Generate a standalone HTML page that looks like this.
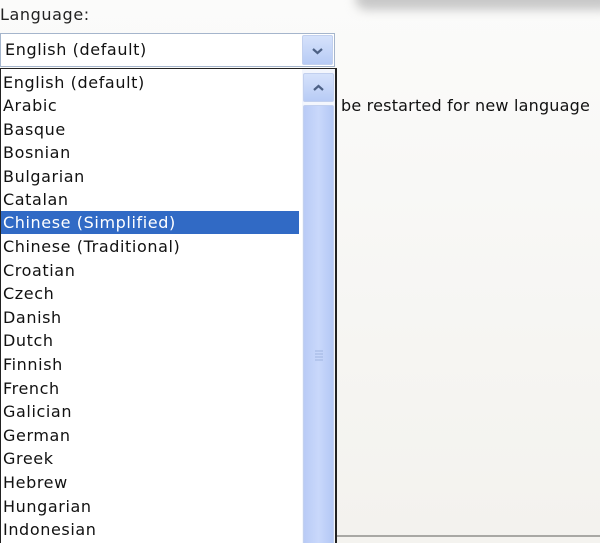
<!DOCTYPE html>
<html style="overflow:hidden;height:543px"><head><style>
body{margin:0;width:600px;height:543px;overflow:hidden;background:#f4f3ef;font-family:"DejaVu Sans","Liberation Sans",sans-serif;position:relative;letter-spacing:0.6px}
.bg{position:absolute;left:0;top:0;width:600px;height:535px;background:linear-gradient(#fbfbfa,#f3f2ee)}
.shadow{position:absolute;left:355px;top:-14px;width:260px;height:24px;border-radius:12px;background:#c8c8c8;filter:blur(5px)}
.bottomline{position:absolute;left:336px;top:535px;width:264px;height:2px;background:#a8a8a4}
.lbl{position:absolute;left:0;top:5px;font-size:16px;color:#222}
.combo{position:absolute;left:0;top:33px;width:333px;height:32px;border:1px solid #a5b5cc;background:#fff}
.combo span{position:absolute;left:4px;top:6px;font-size:16px;color:#111}
.btn{position:absolute;background:linear-gradient(#d6e2fb,#b7cbf5);border:1px solid #c2d0ee;border-radius:2px}
.list{position:absolute;left:0;top:68px;width:334px;height:480px;border:1px solid #222;border-right:2px solid #222;background:#fff;overflow:hidden}
.it{position:absolute;left:2px;font-size:16px;color:#111;white-space:nowrap;height:23px;line-height:23px}
.sel{position:absolute;left:0;top:142px;width:298px;height:23px;background:#316ac5}
.sb{position:absolute;left:301px;top:0;width:33px;height:480px;background:#f3f6fd}
.msg{position:absolute;left:341px;top:96px;font-size:16px;color:#111;white-space:nowrap;letter-spacing:0.2px}
</style></head><body>
<div class="bg"></div>
<div class="shadow"></div>
<div class="bottomline"></div>
<div class="lbl">Language:</div>
<div class="combo"><span>English (default)</span>
<div class="btn" style="left:301px;top:1px;width:29px;height:28px"><svg width="29" height="28"><path d="M10 13l4.5 4 4.5-4" stroke="#4d6185" stroke-width="2.2" fill="none"/></svg></div></div>
<div class="msg">be restarted for new language</div>
<div class="list">
<div class="sel"></div>
<div class="sb">
<div class="btn" style="left:1px;top:4px;width:29px;height:27px"><svg width="29" height="27"><path d="M10 16l4.5-4 4.5 4" stroke="#4d6185" stroke-width="2.2" fill="none"/></svg></div>
<div class="btn" style="left:1px;top:36px;width:29px;height:450px;background:linear-gradient(90deg,#b9cbf6,#c9d8fb 50%,#b4c8f5)"><svg width="29" height="300"><path d="M11 245h8M11 248h8M11 251h8M11 254h8" stroke="#9fb4e0" stroke-width="1"/></svg></div>
</div>
<div class="it" style="top:2px">English (default)</div>
<div class="it" style="top:25px">Arabic</div>
<div class="it" style="top:49px">Basque</div>
<div class="it" style="top:72px">Bosnian</div>
<div class="it" style="top:96px">Bulgarian</div>
<div class="it" style="top:119px">Catalan</div>
<div class="it" style="top:142px;color:#fff">Chinese (Simplified)</div>
<div class="it" style="top:166px">Chinese (Traditional)</div>
<div class="it" style="top:190px">Croatian</div>
<div class="it" style="top:213px">Czech</div>
<div class="it" style="top:237px">Danish</div>
<div class="it" style="top:260px">Dutch</div>
<div class="it" style="top:284px">Finnish</div>
<div class="it" style="top:308px">French</div>
<div class="it" style="top:331px">Galician</div>
<div class="it" style="top:355px">German</div>
<div class="it" style="top:378px">Greek</div>
<div class="it" style="top:402px">Hebrew</div>
<div class="it" style="top:426px">Hungarian</div>
<div class="it" style="top:449px">Indonesian</div>
</div>
</body></html>
